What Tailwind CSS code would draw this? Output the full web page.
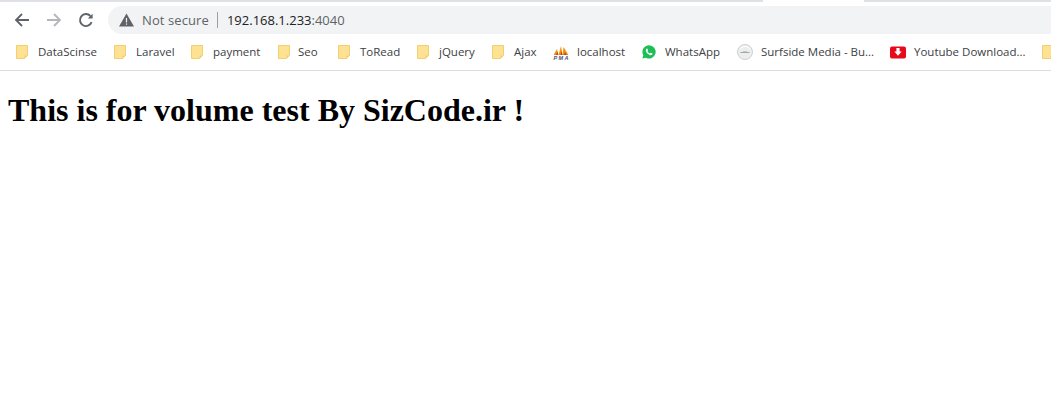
<!DOCTYPE html>
<html lang="en">
<head>
  <meta charset="UTF-8">
  <title>192.168.1.233:4040</title>
  <script src="https://cdn.jsdelivr.net/npm/@tailwindcss/browser@4"></script>
</head>
<body class="bg-white h-[418px] overflow-hidden font-['Open_Sans',sans-serif]">
  <svg width="0" height="0" class="absolute">
    <defs>
      <symbol id="folder" viewBox="0 0 12 14">
        <path d="M0.5 0.5H11.5V10.500L8.500 13.500H0.500Z" fill="#fde293" stroke="#f3cf74"/>
        <path d="M8.500 13.500V10.500H11.500" fill="#f3cf74"/>
      </symbol>
    </defs>
  </svg>

  <!-- tab strip -->
  <div class="flex h-[2px] bg-[#dee1e6]">
    <div class="w-[763px]"></div>
    <div class="w-[101px] bg-white"></div>
  </div>

  <!-- toolbar -->
  <div class="flex items-center h-[32px] pt-[4px]">
    <div class="flex items-center w-[108px] shrink-0 pl-[14px]">
      <svg width="16" height="16" viewBox="0 0 16 16" class="mr-[16px]" fill="none" stroke="#5f6368" stroke-width="1.8"><path d="M15 8H2.500M8 2L2 8l6 6"/></svg>
      <svg width="16" height="16" viewBox="0 0 16 16" class="mr-[16px]" fill="none" stroke="#b4b6b9" stroke-width="1.8"><path d="M1 8h12.500M8 2l6 6-6 6"/></svg>
      <svg width="16" height="16" viewBox="0 0 16 16" fill="none" stroke="#5f6368" stroke-width="1.9"><path d="M13.600 10.200A6 6 0 1 1 12.400 4"/><path d="M14.600 1.800L14.600 6.600L9.800 6.600Z" fill="#5f6368" stroke="none"/></svg>
    </div>
    <div class="flex-1 h-[28px] bg-[#f1f3f4] rounded-l-[14px] flex items-center pl-[11px] text-[13px] leading-none">
      <svg width="15" height="14" viewBox="0 0 15 14" class="mr-[8px]"><path d="M7.500 0.500L15 13.500H0Z" fill="#5f6368"/><path d="M6.900 5h1.200v4.400H6.900zM6.900 10.400h1.200v1.300H6.900z" fill="#f1f3f4"/></svg>
      <span class="text-[#5f6368] tracking-[0.1px]">Not secure</span>
      <span class="w-px h-[16px] bg-[#9aa0a6] mx-[8px]"></span>
      <span class="text-[#202124] ml-[1px]">192.168.1.233<span class="text-[#5f6368]">:4040</span></span>
    </div>
  </div>

  <!-- bookmarks -->
  <div class="flex items-center h-[37px] border-b border-[#dadce0] pl-[16px] text-[11.500px] text-[#3c4043] whitespace-nowrap overflow-hidden">
    <div class="flex items-center shrink-0 w-[98px]"><svg width="12" height="14" class="mr-[10px]"><use href="#folder"/></svg>DataScinse</div>
    <div class="flex items-center shrink-0 w-[77px]"><svg width="12" height="14" class="mr-[10px]"><use href="#folder"/></svg>Laravel</div>
    <div class="flex items-center shrink-0 w-[87px]"><svg width="12" height="14" class="mr-[10px]"><use href="#folder"/></svg>payment</div>
    <div class="flex items-center shrink-0 w-[60px]"><svg width="12" height="14" class="mr-[8px]"><use href="#folder"/></svg>Seo</div>
    <div class="flex items-center shrink-0 w-[79px]"><svg width="12" height="14" class="mr-[10px]"><use href="#folder"/></svg>ToRead</div>
    <div class="flex items-center shrink-0 w-[75px]"><svg width="12" height="14" class="mr-[10px]"><use href="#folder"/></svg>jQuery</div>
    <div class="flex items-center shrink-0 w-[61px]"><svg width="12" height="14" class="mr-[10px]"><use href="#folder"/></svg>Ajax</div>
    <div class="flex items-center shrink-0 w-[89px]">
      <svg width="16" height="15" viewBox="0 0 16 15" class="mr-[8px]">
        <path d="M0.500 10L4 4 5.500 10zM5.500 10L8 1l1.500 9zM9.500 10L10.500 2l5 8z" fill="#f29111"/>
        <path d="M3 10l1.500-3.500L5 10zM7.500 10l1-4.500L9.300 10zM11 10l1-3 1.500 3z" fill="#cc3a12"/>
        <text x="0.500" y="15" font-family="Liberation Sans" font-size="5.500" font-weight="700" font-style="italic" fill="#46507a" textLength="15">PMA</text>
      </svg>localhost</div>
    <div class="flex items-center shrink-0 w-[95px]">
      <svg width="14" height="14" viewBox="0 0 14 14" class="mr-[9px]">
        <path d="M7 0.300A6.600 6.600 0 0 0 1.300 10.200L0.400 13.600 3.900 12.700A6.600 6.600 0 1 0 7 0.300Z" fill="#1ebe57"/>
        <path d="M4.800 3.500C4 4 3.500 5 4 6.300 4.700 8 6 9.400 7.800 10 9.200 10.500 10.200 9.800 10.500 9 10.600 8.600 10.500 8.400 10.200 8.300L8.900 7.700C8.600 7.600 8.400 7.700 8.300 7.900L7.800 8.500C6.700 8.100 5.900 7.300 5.400 6.300L5.900 5.800C6.100 5.600 6.100 5.400 6 5.200L5.400 3.800C5.300 3.500 5 3.400 4.800 3.500Z" fill="#fff"/>
      </svg>WhatsApp</div>
    <div class="flex items-center shrink-0 w-[153px]">
      <svg width="16" height="16" viewBox="0 0 16 16" class="mr-[8px]">
        <circle cx="8" cy="8" r="7.500" fill="#eceded" stroke="#cfd0d2"/>
        <path d="M3.500 8.500h9" stroke="#a5a8ab" stroke-width="1"/>
        <path d="M6 7.500h4" stroke="#c4c6c9" stroke-width="1"/>
        <path d="M3 5.500A5.500 5.500 0 0 1 13 5.500" stroke="#fff" fill="none"/>
      </svg>Surfside Media - Bu...</div>
    <div class="flex items-center shrink-0 w-[152px]">
      <svg width="16" height="13" viewBox="0 0 16 13" class="mr-[8px]">
        <rect width="16" height="12" y="0.500" rx="2" fill="#e8091c"/>
        <path d="M6.400 2h3.200v3.600h2.100L8 9.700 4.300 5.600h2.100z" fill="#fff"/>
      </svg>Youtube Download...</div>
    <div class="flex items-center shrink-0"><svg width="12" height="14"><use href="#folder"/></svg></div>
  </div>

  <h1 class="m-2 mt-[21px] font-['Liberation_Serif',serif] font-bold text-[32px] leading-[37px] text-black">This is for volume test By SizCode.ir !</h1>
</body>
</html>
